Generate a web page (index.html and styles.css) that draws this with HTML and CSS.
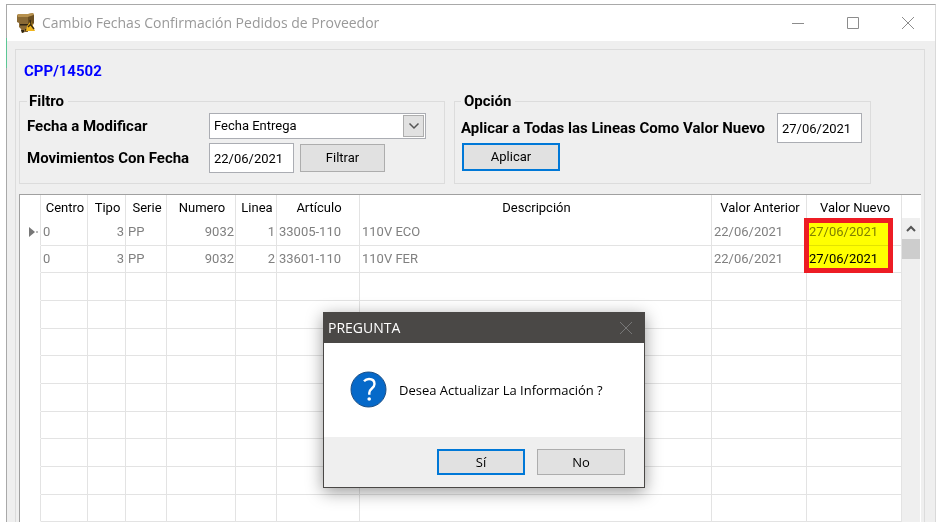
FILE: index.html
```html
<!DOCTYPE html>
<html lang="es">
<head>
<meta charset="utf-8">
<title>Cambio Fechas Confirmación Pedidos de Proveedor</title>
<link rel="stylesheet" href="styles.css">
</head>
<body>
<main class="window">
  <header class="titlebar">
    <svg class="app-icon" width="18" height="20" viewBox="0 0 18 20" aria-hidden="true">
      <path d="M0 2 2 1h9l5-1 1 2v8l-2 4h-4v5H8l-3 1-1-4-2-2V10L0 9z" fill="#8a6a35"/>
      <path d="M0 2 2 1h9l5-1 1 2-6 2H1z" fill="#b8924f"/>
      <path d="M11 4l6-2v8l-6 2z" fill="#6b4f22"/>
      <path d="M3 11h8v1.500H3zM4 17h3v2l-2 1zM8 16h2l-1 3z" fill="#2e2413"/>
      <path d="M14 8 18 18H9l1-5z" fill="#f0b51e"/>
      <path d="M13 7l1 4-3 3M14 12l3 4" stroke="#3a2b10" stroke-width="1.400" fill="none"/>
    </svg>
    <h1 class="title">Cambio Fechas Confirmación Pedidos de Proveedor</h1>
    <div class="controls">
      <button class="control" type="button" aria-label="Minimizar"><svg width="14" height="14" viewBox="0 0 14 14"><path d="M1 7.500h12" /></svg></button>
      <button class="control" type="button" aria-label="Maximizar"><svg width="14" height="14" viewBox="0 0 14 14"><path d="M1.500 1.500h11v11h-11z" /></svg></button>
      <button class="control" type="button" aria-label="Cerrar"><svg width="14" height="14" viewBox="0 0 14 14"><path d="M1 1l12 12M13 1L1 13" /></svg></button>
    </div>
  </header>

  <section class="panel">
    <h2 class="order">CPP/14502</h2>
    <div class="groups">
      <fieldset class="group filter">
        <legend>Filtro</legend>
        <label for="campo">Fecha a Modificar</label>
        <div class="select-box">
          <select id="campo"><option>Fecha Entrega</option></select>
          <span class="arrow"><svg width="12" height="8" viewBox="0 0 12 8"><path d="M1.500 1.500 6 6l4.500-4.500" /></svg></span>
        </div>
        <label for="fecha">Movimientos Con Fecha</label>
        <div class="date-row">
          <input id="fecha" class="date" type="text" value="22/06/2021">
          <button class="button filter-button" type="button">Filtrar</button>
        </div>
      </fieldset>
      <fieldset class="group option">
        <legend>Opción</legend>
        <div class="option-row">
          <label for="nuevo">Aplicar a Todas las Lineas Como Valor Nuevo</label>
          <input id="nuevo" class="date" type="text" value="27/06/2021">
        </div>
        <button class="button primary apply-button" type="button">Aplicar</button>
      </fieldset>
    </div>

    <div class="grid">
      <table class="lines">
        <colgroup>
          <col class="c-mark"><col class="c-centro"><col class="c-tipo"><col class="c-serie"><col class="c-numero"><col class="c-linea"><col class="c-articulo"><col><col class="c-valor"><col class="c-valor">
        </colgroup>
        <thead>
          <tr><td></td><th>Centro</th><th>Tipo</th><th>Serie</th><th>Numero</th><th>Linea</th><th>Artículo</th><th>Descripción</th><th>Valor Anterior</th><th>Valor Nuevo</th></tr>
        </thead>
        <tbody>
          <tr><td class="mark"><svg width="12" height="12" viewBox="0 0 12 12"><path d="M1 1l6 5-6 5z" fill="#777"/><path d="M8 5.500h2v1H8z" fill="#777"/></svg></td><td>0</td><td class="num">3</td><td>PP</td><td class="num">9032</td><td class="num">1</td><td>33005-110</td><td>110V ECO</td><td>22/06/2021</td><td>27/06/2021</td></tr>
          <tr><td></td><td>0</td><td class="num">3</td><td>PP</td><td class="num">9032</td><td class="num">2</td><td>33601-110</td><td>110V FER</td><td>22/06/2021</td><td class="active">27/06/2021</td></tr>
          <tr><td></td><td></td><td></td><td></td><td></td><td></td><td></td><td></td><td></td><td></td></tr>
          <tr><td></td><td></td><td></td><td></td><td></td><td></td><td></td><td></td><td></td><td></td></tr>
          <tr><td></td><td></td><td></td><td></td><td></td><td></td><td></td><td></td><td></td><td></td></tr>
          <tr><td></td><td></td><td></td><td></td><td></td><td></td><td></td><td></td><td></td><td></td></tr>
          <tr><td></td><td></td><td></td><td></td><td></td><td></td><td></td><td></td><td></td><td></td></tr>
          <tr><td></td><td></td><td></td><td></td><td></td><td></td><td></td><td></td><td></td><td></td></tr>
          <tr><td></td><td></td><td></td><td></td><td></td><td></td><td></td><td></td><td></td><td></td></tr>
          <tr><td></td><td></td><td></td><td></td><td></td><td></td><td></td><td></td><td></td><td></td></tr>
          <tr><td></td><td></td><td></td><td></td><td></td><td></td><td></td><td></td><td></td><td></td></tr>
        </tbody>
      </table>
      <div class="scrollbar">
        <span class="scroll-up"><svg width="10" height="7" viewBox="0 0 10 7"><path d="M1 6l4-4 4 4" /></svg></span>
        <span class="thumb"></span>
      </div>
      <div class="highlight"></div>
      <div class="highlight-frame"></div>
    </div>
  </section>

  <section class="dialog" role="dialog" aria-labelledby="dialog-title">
    <header class="dialog-bar">
      <h2 id="dialog-title">PREGUNTA</h2>
      <button class="dialog-close" type="button" aria-label="Cerrar"><svg width="14" height="14" viewBox="0 0 14 14"><path d="M1 1l12 12M13 1L1 13" /></svg></button>
    </header>
    <div class="dialog-body">
      <svg width="38" height="38" viewBox="0 0 38 38" aria-hidden="true">
        <circle cx="18.500" cy="18.500" r="17.500" fill="#0669c9" stroke="#1c4f86"/>
        <path d="M14 10.200q2-2.200 5-2.200 5.500 0 5.500 5c0 4.300-5.200 4.700-5.200 8.800v2" fill="none" stroke="#fff" stroke-width="2.400"/>
        <circle cx="19.200" cy="28" r="1.800" fill="#fff"/>
      </svg>
      <p>Desea Actualizar La Información ?</p>
    </div>
    <footer class="dialog-actions">
      <button class="button primary" type="button">Sí</button>
      <button class="button" type="button">No</button>
    </footer>
  </section>
</main>
</body>
</html>
```
FILE: styles.css
```css
* { box-sizing: border-box; }

body {
  margin: 0;
  background: #fff;
  color: #000;
  font: 13px/16px Roboto, "Liberation Sans", sans-serif;
}

h1, h2, p { margin: 0; font-weight: 400; }

button, input, select { font: inherit; color: inherit; }

.window {
  position: relative;
  margin: 4px 5px 6px 6px;
  border: 1px solid #a9a9a9;
  border-right-color: #d9d9d9;
  border-bottom: 0;
  background: #efefef;
}

.window::before {
  content: "";
  position: absolute;
  left: -1px;
  top: 33px;
  width: 1px;
  height: 30px;
  background: #5cc795;
}

.titlebar {
  display: flex;
  align-items: center;
  height: 36px;
  padding-left: 10px;
  background: #fff;
}

.app-icon { margin-right: 7px; }

.title {
  flex: 1;
  color: #999;
  font: 14px/20px "Open Sans", "Noto Sans", sans-serif;
}

.controls { display: flex; }

.control {
  display: grid;
  place-items: center;
  width: 55px;
  height: 34px;
  padding: 0;
  border: 0;
  background: none;
}

.control svg, .dialog-close svg { fill: none; stroke: #8c8c8c; }

.panel {
  margin: 8px 10px 0 8px;
  padding: 11px 3px 0;
  border: 1px solid #dcdcdc;
  border-bottom: 0;
}

.order {
  margin: 0 0 12px 5px;
  color: #00f;
  font-size: 15px;
  font-weight: 700;
  line-height: 20px;
}

.groups {
  display: grid;
  grid-template-columns: 426fr 417fr 41fr;
  column-gap: 9px;
}

.group {
  min-width: 0;
  margin: 0;
  padding: 4px 8px 10px 7px;
  border: 1px solid #dcdcdc;
}

.group legend { padding: 0 4px 0 2px; }

.group legend, .group label { font-size: 15px; font-weight: 700; }

.filter {
  display: grid;
  grid-template-columns: 182px 1fr;
  row-gap: 4px;
  align-items: center;
  padding-right: 18px;
}

.select-box { position: relative; }

.select-box select {
  appearance: none;
  display: block;
  width: 100%;
  height: 26px;
  padding: 0 24px 0 4px;
  border: 1px solid #abadb3;
  border-radius: 0;
  background: #fff;
}

.arrow {
  position: absolute;
  top: 2px;
  right: 2px;
  bottom: 2px;
  display: grid;
  place-items: center;
  width: 21px;
  border: 1px solid #adadad;
  background: #e1e1e1;
  pointer-events: none;
}

.arrow svg { fill: none; stroke: #555; stroke-width: 1.500; }

.date-row { display: flex; align-items: center; gap: 6px; }

.date {
  width: 85px;
  height: 30px;
  padding: 0 4px;
  border: 1px solid #abadb3;
  background: #fff;
}

.button {
  width: 88px;
  height: 26px;
  padding: 0;
  border: 1px solid #adadad;
  background: #e1e1e1;
}

.primary { border: 2px solid #0078d7; }

.filter-button { width: 85px; height: 28px; }

.option-row { display: flex; align-items: center; justify-content: space-between; }

.option { padding-left: 6px; }

.option legend { padding-left: 3px; }

.apply-button { display: block; width: 98px; height: 28px; margin-left: 1px; }

.grid {
  position: relative;
  display: flex;
  margin-top: 10px;
  border-top: 1px solid #a0a0a0;
  border-left: 1px solid #a0a0a0;
  background: #fff;
}

.lines {
  flex: 1;
  width: 0;
  table-layout: fixed;
  border-collapse: separate;
  border-spacing: 0;
}

.c-mark { width: 21px; }
.c-centro { width: 47px; }
.c-tipo { width: 38px; }
.c-serie { width: 41px; }
.c-numero { width: 69px; }
.c-linea { width: 41px; }
.c-articulo { width: 83px; }
.c-valor { width: 95px; }

.lines th, .lines td {
  padding: 0 2px;
  border-right: 1px solid #e3e3e3;
  font-weight: 400;
  white-space: nowrap;
}

.lines th { padding-top: 2px; padding-left: 4px; }

.lines thead tr { height: 23px; }
.lines tbody tr { height: 28px; }
.lines tbody tr:nth-child(3n + 2) { height: 27px; }

.lines tbody td { border-bottom: 1px solid #e3e3e3; color: #808080; }
.lines tbody td:first-child { border-bottom-color: transparent; }
.lines tbody .num { padding-right: 1px; text-align: right; }
.lines tbody .active { color: #000; }
.lines tbody .mark { padding: 0; text-align: right; }

.mark svg { display: block; margin-left: auto; }

.scrollbar {
  display: flex;
  flex-direction: column;
  width: 19px;
  border-right: 1px solid #fff;
  border-top: 23px solid #fff;
  background: #efefef;
}

.scroll-up { display: grid; place-items: center; height: 21px; }
.scroll-up svg { fill: none; stroke: #555; stroke-width: 2; }
.thumb { height: 20px; background: #cdcdcd; }

.highlight, .highlight-frame {
  position: absolute;
  top: 23px;
  right: 28px;
  width: 89px;
  height: 55px;
}

.highlight { background: #ff0; mix-blend-mode: multiply; }
.highlight-frame { border: 5px solid #ed1c24; }

.dialog {
  position: absolute;
  left: 316px;
  top: 307px;
  width: 322px;
  border: 1px solid #4a4846;
  background: #fff;
  box-shadow: 0 4px 16px rgba(0, 0, 0, 0.4);
  font: 13px/18px "Open Sans", "Noto Sans", sans-serif;
}

.dialog-bar {
  display: flex;
  align-items: center;
  justify-content: space-between;
  height: 30px;
  padding: 0 11px 0 4px;
  background: #4a4846;
  color: #fff;
}

.dialog-bar h2 { font-size: 14px; }

.dialog-close { display: flex; padding: 0; border: 0; background: none; }
.dialog-close svg { stroke: #777; }

.dialog-body {
  display: flex;
  align-items: center;
  gap: 11px;
  height: 94px;
  padding-left: 26px;
}

.dialog-actions {
  display: flex;
  justify-content: flex-end;
  gap: 12px;
  padding: 12px 19px;
  background: #efefef;
}
```
